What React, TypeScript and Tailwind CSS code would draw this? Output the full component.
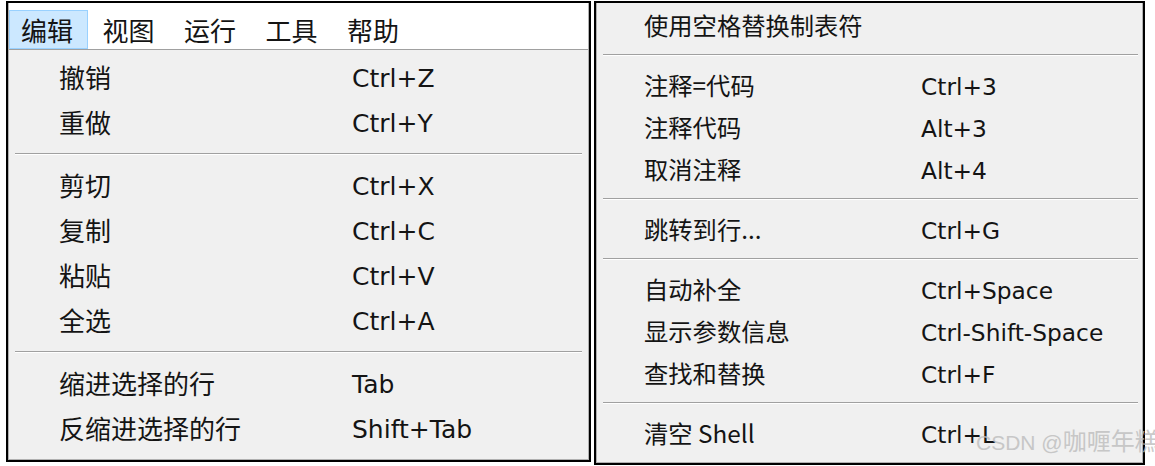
import React from "react";

const CJK = "font-['Noto_Sans_CJK_SC',sans-serif]";
const LAT = "font-['DejaVu_Sans','Noto_Sans_CJK_SC',sans-serif]";

type Item = { label: string; key?: string } | "sep";

const leftItems: Item[] = [
  { label: "撤销", key: "Ctrl+Z" },
  { label: "重做", key: "Ctrl+Y" },
  "sep",
  { label: "剪切", key: "Ctrl+X" },
  { label: "复制", key: "Ctrl+C" },
  { label: "粘贴", key: "Ctrl+V" },
  { label: "全选", key: "Ctrl+A" },
  "sep",
  { label: "缩进选择的行", key: "Tab" },
  { label: "反缩进选择的行", key: "Shift+Tab" },
];

const rightItems: Item[] = [
  { label: "使用空格替换制表符" },
  "sep",
  { label: "注释=代码", key: "Ctrl+3" },
  { label: "注释代码", key: "Alt+3" },
  { label: "取消注释", key: "Alt+4" },
  "sep",
  { label: "跳转到行...", key: "Ctrl+G" },
  "sep",
  { label: "自动补全", key: "Ctrl+Space" },
  { label: "显示参数信息", key: "Ctrl-Shift-Space" },
  { label: "查找和替换", key: "Ctrl+F" },
  "sep",
  { label: "清空 Shell", key: "Ctrl+L" },
];

function SepLine() {
  return (
    <div className="flex flex-col">
      <div className="h-[1px] bg-[#a0a0a0]" />
      <div className="h-[1px] bg-white" />
    </div>
  );
}

export default function App() {
  return (
    <div className="relative w-[1155px] h-[466px] overflow-hidden bg-white text-[#141414]">
      <div className="flex items-start pt-[1px] pl-[6px] gap-[3px]">
        {/* Left panel */}
        <div className="w-[585px] h-[461px] border-2 border-black bg-[#f0f0f0] flex flex-col">
          <div className="flex-1 flex flex-col border-x border-b border-[#b0b0b0]">
            <div className="h-[47px] bg-white border-b border-[#a0a0a0] flex items-end gap-[2.5px]">
              <div className="w-[79px] h-[39px] bg-[#cce8ff] border border-[#99d1ff] flex items-center pl-[11px]">
                <span className={`${CJK} text-[26px] leading-none`}>编辑</span>
              </div>
              {["视图", "运行", "工具", "帮助"].map((t) => (
                <div key={t} className="w-[79px] h-[39px] flex items-center pl-[12px]">
                  <span className={`${CJK} text-[26px] leading-none`}>{t}</span>
                </div>
              ))}
            </div>
            <div className="pt-[6px] flex flex-col">
              {leftItems.map((it, i) =>
                it === "sep" ? (
                  <div key={i} className="h-[18px] pt-[7px] px-[6px]">
                    <SepLine />
                  </div>
                ) : (
                  <div key={i} className="h-[45px] flex items-center pl-[50px]">
                    <span className={`${CJK} w-[293px] text-[26px] leading-none pb-[3px]`}>{it.label}</span>
                    <span className={`${LAT} text-[25px] leading-none`}>{it.key}</span>
                  </div>
                )
              )}
            </div>
          </div>
        </div>

        {/* Right panel */}
        <div className="w-[551px] h-[464px] border-2 border-black bg-[#f0f0f0] flex flex-col">
          <div className="flex-1 flex flex-col border-x border-b border-[#b0b0b0] pt-[3px]">
            {rightItems.map((it, i) =>
              it === "sep" ? (
                <div key={i} className="h-[18px] pt-[6px] pl-[6px] pr-[4px]">
                  <SepLine />
                </div>
              ) : (
                <div key={i} className="h-[42px] flex items-center pl-[47px]">
                  <span className={`${CJK} w-[277px] text-[24.3px] leading-none whitespace-nowrap pb-[3px]`}>{it.label}</span>
                  {it.key && (
                    <span className={`${LAT} text-[23.3px] leading-none whitespace-nowrap`}>{it.key}</span>
                  )}
                </div>
              )
            )}
          </div>
        </div>
      </div>

      {/* watermark */}
      <div className="absolute left-[976px] top-[428px] whitespace-nowrap text-[#bdbdbd] opacity-80 leading-none flex items-baseline">
        <span className="font-['Liberation_Sans',sans-serif] text-[21px]">CSDN @</span>
        <span className={`${CJK} text-[24px]`}>咖喱年糕</span>
      </div>
    </div>
  );
}
